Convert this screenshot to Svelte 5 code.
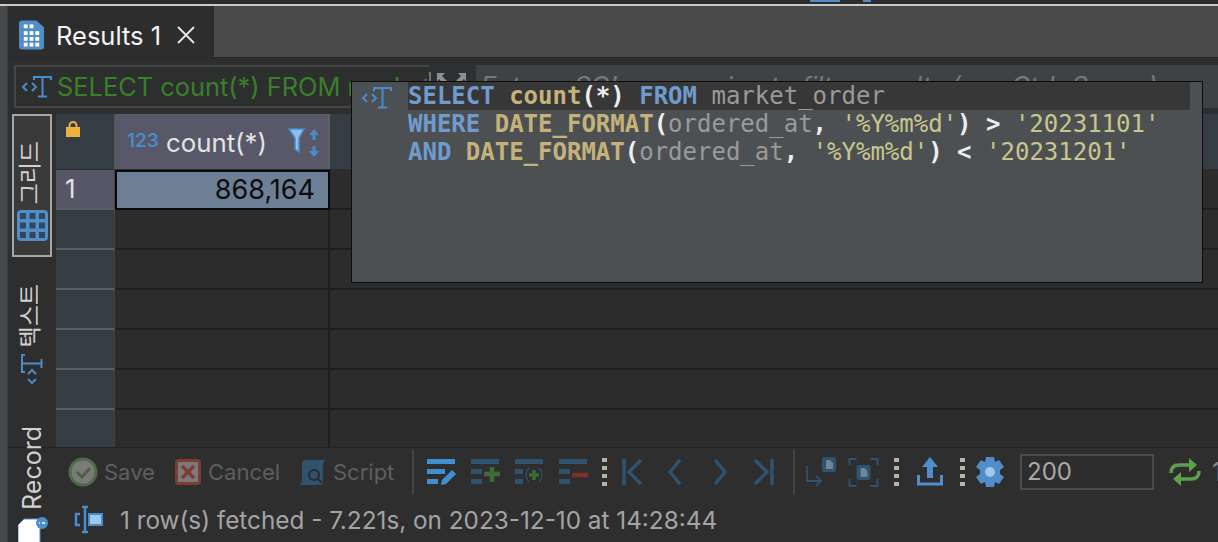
<script>
  const emptyRows = [0, 1, 2, 3, 4, 5];
  const gridCells = [0, 1, 2, 3, 4, 5, 6, 7, 8];
</script>

{#snippet sqlIcon()}
  <svg class="sql-icon" width="32" height="26" viewBox="0 0 32 26" fill="none">
    <path d="M6 9l-4 4 4 4M11 9l4 4-4 4" stroke="#4a8bc9" stroke-width="2" />
    <path d="M13 6V3h17v3M21.500 3v19M17 22.500h9" stroke="#4a8bc9" stroke-width="2" />
  </svg>
{/snippet}

{#snippet dots()}
  <span class="dots"><i></i><i></i><i></i><i></i></span>
{/snippet}

<div class="window">
  <div class="top-strip">
    <span class="sliver one"></span>
    <span class="sliver two"></span>
  </div>
  <div class="top-line"></div>

  <div class="frame">
    <div class="tabs">
      <div class="tab">
        <svg width="25" height="30" viewBox="0 0 26 30">
          <path d="M3 0h15l8 7v20a3 3 0 0 1-3 3H3a3 3 0 0 1-3-3V3a3 3 0 0 1 3-3z" fill="#4f8ec9" />
          <g fill="#fff">
            <rect x="5" y="4" width="4" height="4" /><rect x="11" y="4" width="4" height="4" />
            <rect x="5" y="11" width="4" height="4" /><rect x="11" y="11" width="4" height="4" /><rect x="17" y="11" width="4" height="4" />
            <rect x="5" y="17" width="4" height="4" /><rect x="11" y="17" width="4" height="4" /><rect x="17" y="17" width="4" height="4" />
            <rect x="5" y="23" width="4" height="4" /><rect x="11" y="23" width="4" height="4" /><rect x="17" y="23" width="4" height="4" />
          </g>
        </svg>
        <span class="tab-label">Results 1</span>
        <svg class="tab-close" width="20" height="20" viewBox="0 0 20 20">
          <path d="M2 2l16 16M18 2L2 18" stroke="#e8e8e8" stroke-width="1.800" />
        </svg>
      </div>
    </div>

    <div class="filter-bar">
      <div class="filter-input">
        {@render sqlIcon()}
        <span class="filter-text">SELECT count(*) FROM market_order</span>
      </div>
      <div class="filter-tools">
        <svg width="38" height="16" viewBox="0 0 38 16">
          <path d="M1 1v15" stroke="#b5b5b5" stroke-width="1" />
          <path d="M8 2h8l-3 3 5 5-3 3-5-5-2 3z" fill="#8e9192" />
          <path d="M37 2h-8l3 3-5 5 3 3 5-5 2 3z" fill="#8e9192" />
        </svg>
      </div>
      <div class="filter-hint">Enter a SQL expression to filter results (use Ctrl+Space)</div>
    </div>

    <div class="content">
      <div class="side-tabs">
        <div class="side-tab active">
          <span class="side-label">그리드</span>
          <svg width="31" height="31" viewBox="0 0 31 31">
            <rect width="31" height="31" rx="4" fill="#4f8ec9" />
            {#each gridCells as c}
              <rect x={3 + (c % 3) * 9.500} y={3 + Math.floor(c / 3) * 9.500} width="6" height="6" fill="#35465a" />
            {/each}
          </svg>
        </div>
        <div class="side-tab text-tab">
          <span class="side-label">텍스트</span>
          <span class="rotated-icon">{@render sqlIcon()}</span>
        </div>
        <div class="side-tab record-tab">
          <span class="side-label latin">Record</span>
        </div>
        <div class="record-icon">
          <svg width="30" height="28" viewBox="0 0 30 28">
            <path d="M0 8l6-6h14a2 2 0 0 1 2 2v24H0z" fill="#fff" stroke="#4f8ec9" stroke-width="1" />
            <circle cx="24" cy="6" r="6" fill="#4f8ec9" />
            <path d="M21 6h1M24 6h3" stroke="#fff" stroke-width="1.500" />
          </svg>
        </div>
      </div>

      <div class="grid-area">
        <div class="grid-head">
          <div class="corner">
            <svg width="14" height="16" viewBox="0 0 14 16">
              <path d="M3.500 7V4.500a3.500 3.500 0 0 1 7 0V7" fill="none" stroke="#f0b03c" stroke-width="2" />
              <rect y="6" width="14" height="10" fill="#f0b03c" />
            </svg>
          </div>
          <div class="col-head">
            <span class="type-tag">123</span>
            <span class="col-name">count(*)</span>
            <svg class="col-icons" width="34" height="30" viewBox="0 0 34 30">
              <path d="M1 1h15l-5 9v14l-4-3V10z" fill="#8ec0ea" stroke="#4a8bc9" stroke-width="1.500" />
              <path d="M26 1l-5 6h3.500v5h3V7H31zM26 29l-5-6h3.500v-5h3v5H31z" fill="#4a8bc9" />
            </svg>
          </div>
          <div class="head-rest"></div>
        </div>
        <div class="grid-row first">
          <div class="row-num selected">1</div>
          <div class="cell selected">868,164</div>
          <div class="cell-rest"></div>
        </div>
        {#each emptyRows as r}
          <div class="grid-row">
            <div class="row-num"></div>
            <div class="cell"></div>
            <div class="cell-rest"></div>
          </div>
        {/each}
      </div>
    </div>

    <div class="toolbar">
      <span class="tool-btn save">
        <svg width="30" height="30" viewBox="0 0 30 30">
          <circle cx="15" cy="15" r="13" fill="#7a7a7a" stroke="#4d6b46" stroke-width="3" />
          <path d="M9 15l5 5 8-9" fill="none" stroke="#46663f" stroke-width="3" />
        </svg>
        <span>Save</span>
      </span>
      <span class="tool-btn cancel">
        <svg width="26" height="26" viewBox="0 0 26 26">
          <rect x="1.500" y="1.500" width="23" height="23" rx="2" fill="#7a7a7a" stroke="#7d3d35" stroke-width="3" />
          <path d="M7 7l12 12M19 7L7 19" stroke="#7d3d35" stroke-width="3.500" />
        </svg>
        <span>Cancel</span>
      </span>
      <span class="tool-btn script">
        <svg width="30" height="28" viewBox="0 0 30 28">
          <path d="M6 2h22c-3 1-3 4-3 7v16c0 1-1 2-2 2H1c2-1 3-3 3-6V5c0-2 1-3 2-3z" fill="#2f526f" />
          <circle cx="16" cy="17" r="5" fill="none" stroke="#2b2b2b" stroke-width="2" />
          <path d="M20 21l4 4" stroke="#2b2b2b" stroke-width="2" />
        </svg>
        <span>Script</span>
      </span>
      <span class="divider"></span>

      <svg class="ic" width="30" height="30" viewBox="0 0 30 30">
        <path d="M1 2h28v5H1zM1 12h18v5H1zM1 22h11v5H1z" fill="#3f8fd2" />
        <path d="M15 28l1-5 10-10 4 4-10 10z" fill="#3f8fd2" />
      </svg>
      <svg class="ic" width="30" height="30" viewBox="0 0 30 30">
        <path d="M1 2h28v5H1zM1 12h11v5H1zM1 22h11v5H1z" fill="#2f526f" />
        <path d="M14 17h16M22 10v15" stroke="#3d6b35" stroke-width="4.500" />
      </svg>
      <svg class="ic" width="30" height="30" viewBox="0 0 30 30">
        <path d="M1 2h28v5H1zM1 12h8v5H1zM1 22h8v5H1z" fill="#2f526f" />
        <path d="M15 11c-4 4-4 10 0 14M25 11c4 4 4 10 0 14" fill="none" stroke="#2f526f" stroke-width="1.200" />
        <path d="M15 18h10M20 13v10" stroke="#3d6b35" stroke-width="3.500" />
      </svg>
      <svg class="ic" width="30" height="30" viewBox="0 0 30 30">
        <path d="M1 2h28v5H1zM1 12h11v5H1zM1 22h11v5H1z" fill="#2f526f" />
        <path d="M14 18h16" stroke="#7d3229" stroke-width="4.500" />
      </svg>
      {@render dots()}

      <svg class="nav nav-first" width="20" height="26" viewBox="0 0 20 26">
        <path d="M2 0v26" stroke="#2f526f" stroke-width="3.500" />
        <path d="M19 1L7 13l12 12" fill="none" stroke="#2f526f" stroke-width="3.500" />
      </svg>
      <svg class="nav nav-prev" width="13" height="26" viewBox="0 0 13 26">
        <path d="M12 1L2 13l10 12" fill="none" stroke="#2f526f" stroke-width="3.500" />
      </svg>
      <svg class="nav nav-next" width="13" height="26" viewBox="0 0 13 26">
        <path d="M1 1l10 12L1 25" fill="none" stroke="#2f526f" stroke-width="3.500" />
      </svg>
      <svg class="nav nav-last" width="20" height="26" viewBox="0 0 20 26">
        <path d="M18 0v26" stroke="#2f526f" stroke-width="3.500" />
        <path d="M1 1l12 12L1 25" fill="none" stroke="#2f526f" stroke-width="3.500" />
      </svg>
      <span class="divider second"></span>

      <svg class="ic doc" width="30" height="30" viewBox="0 0 30 30">
        <path d="M1 9v15h13M10 19l5 5-5 5" fill="none" stroke="#2f526f" stroke-width="1.800" />
        <rect x="16" y="0" width="14" height="15" rx="2" fill="#2f526f" />
        <path d="M20 3h4l3 3v6h-7z" fill="#6f8496" />
      </svg>
      <svg class="ic focus" width="31" height="30" viewBox="0 0 30 30">
        <path d="M1 8V2h7M22 2h7v6M29 22v7h-7M8 29H1v-7" fill="none" stroke="#2f526f" stroke-width="2" />
        <rect x="8" y="8" width="14" height="15" rx="2" fill="#2f526f" />
        <path d="M12 11h4l3 3v6h-7z" fill="#6f8496" />
      </svg>
      {@render dots()}
      <svg class="ic upload" width="26" height="29" viewBox="0 0 26 29">
        <path d="M13 0l8 10h-5v11h-6V10H5z" fill="#4f8ec9" />
        <path d="M1.500 18v9h23v-9" fill="none" stroke="#4f8ec9" stroke-width="3" />
      </svg>
      <span class="dots tight"><i></i><i></i><i></i><i></i></span>
      <svg class="ic gear" width="30" height="30" viewBox="0 0 30 30">
        <path d="M11 0h8l1 5 4-2 5 7-4 3v4l4 3-5 7-4-2-1 5h-8l-1-5-4 2-5-7 4-3v-4L1 10l5-7 4 2z" fill="#4f8ec9" />
        <circle cx="15" cy="15" r="5" fill="#9cc9ec" />
      </svg>
      <div class="fetch-size">200</div>
      <svg class="ic refresh" width="32" height="28" viewBox="0 0 32 28">
        <path d="M2 15c0-6 3-8 8-8h12M30 13c0 6-3 8-8 8H10" fill="none" stroke="#5ea04a" stroke-width="3.500" />
        <path d="M20 0l8 7-8 7zM12 14l-8 7 8 7z" fill="#5ea04a" />
      </svg>
      <span class="cut-digit">1</span>
    </div>

    <div class="status">
      <svg width="30" height="30" viewBox="0 0 30 30">
        <path d="M6 9H2v11h4M8 2h6M8 27h6M11 2v25" fill="none" stroke="#4a8bc9" stroke-width="2.500" />
        <rect x="14" y="8" width="15" height="13" fill="#4a8bc9" />
        <rect x="16" y="10" width="11" height="9" fill="#9cc9ec" />
      </svg>
      <span>1 row(s) fetched - 7.221s, on 2023-12-10 at 14:28:44</span>
    </div>
  </div>

  <div class="popup">
    <div class="popup-icon">{@render sqlIcon()}</div>
    <div class="code">
      <div class="line current"><b class="kw">SELECT</b> <b class="fn">count</b><b class="pn">(*)</b> <b class="kw">FROM</b> <span class="id">market_order</span></div>
      <div class="line"><b class="kw">WHERE</b> <b class="fn">DATE_FORMAT</b><b class="pn">(</b><span class="id">ordered_at</span><b class="pn">,</b> <span class="str">'%Y%m%d'</span><b class="pn">) &gt;</b> <span class="str">'20231101'</span></div>
      <div class="line"><b class="kw">AND</b> <b class="fn">DATE_FORMAT</b><b class="pn">(</b><span class="id">ordered_at</span><b class="pn">,</b> <span class="str">'%Y%m%d'</span><b class="pn">) &lt;</b> <span class="str">'20231201'</span></div>
    </div>
  </div>
</div>

<style>
  :global(body) {
    margin: 0;
    background: #2e2e2e;
  }

  .window {
    position: relative;
    width: 1218px;
    height: 542px;
    overflow: hidden;
    display: flex;
    flex-direction: column;
    background: #2e2e2e;
    font-family: Inter, "Liberation Sans", sans-serif;
  }

  .top-strip {
    position: relative;
    height: 4px;
    background: #2c2c2c;
  }

  .sliver {
    position: absolute;
    top: 0;
    height: 2px;
    background: #4f8ec9;
  }

  .sliver.one { left: 810px; width: 30px; }
  .sliver.two { left: 863px; width: 8px; }

  .top-line {
    height: 2px;
    background: #c9c9c9;
  }

  .frame {
    flex: 1;
    min-height: 0;
    margin-left: 7px;
    display: flex;
    flex-direction: column;
    border-left: 1px solid #3a3a3a;
    box-shadow: -7px 0 0 #474a4c;
    background: #2e2e2e;
  }

  .tabs {
    height: 51px;
    flex-shrink: 0;
    display: flex;
    background: #4a4a4b;
  }

  .tab {
    width: 206px;
    display: flex;
    align-items: center;
    padding: 7px 0 0 11px;
    box-sizing: border-box;
    background: #2d2d2d;
    color: #f4f4f4;
    font-size: 25.500px;
  }

  .tab-label {
    margin-left: 12px;
  }

  .tab-close {
    margin-left: 15px;
  }

  .filter-bar {
    height: 57px;
    flex-shrink: 0;
    display: flex;
    background: #2e2e2e;
    padding-top: 7px;
    box-sizing: border-box;
    border-top: 1px solid #2a2a2a;
  }

  .filter-input {
    width: 415px;
    height: 43px;
    margin-left: 6px;
    box-sizing: border-box;
    flex-shrink: 0;
    display: flex;
    align-items: center;
    gap: 4px;
    padding-left: 5px;
    border: 2px solid #454545;
    border-right: none;
    background: #2d2f2f;
    overflow: hidden;
    white-space: nowrap;
  }

  .filter-text {
    font-size: 25.400px;
    color: #3a7f2a;
  }

  .filter-tools {
    width: 47px;
    flex-shrink: 0;
    padding-top: 6px;
    background: #2f3031;
    height: 43px;
    box-sizing: border-box;
  }

  .filter-hint {
    flex: 1;
    min-width: 0;
    height: 43px;
    box-sizing: border-box;
    padding: 5px 0 0 5px;
    background: #3f4244;
    color: #77797b;
    font-size: 25.600px;
    font-style: italic;
    white-space: nowrap;
    overflow: hidden;
  }

  .content {
    height: 333px;
    flex-shrink: 0;
    display: flex;
    background: #2e2e2e;
  }

  .side-tabs {
    width: 48px;
    flex-shrink: 0;
    display: flex;
    flex-direction: column;
    align-items: center;
    box-sizing: border-box;
    position: relative;
  }

  .side-tab {
    width: 40px;
    flex-shrink: 0;
    display: flex;
    flex-direction: column;
    align-items: center;
    box-sizing: border-box;
  }

  .side-tab.active {
    height: 143px;
    border: 2px solid #a5a5a5;
    background: #3a3a3a;
    padding-top: 25px;
    gap: 6px;
  }

  .side-tab.text-tab {
    margin-top: 27px;
    gap: 8px;
  }

  .rotated-icon {
    display: block;
    transform: rotate(-90deg);
    height: 26px;
    margin-top: 1px;
  }

  .side-tab.record-tab {
    margin-top: 44px;
  }

  .side-label {
    writing-mode: vertical-rl;
    text-orientation: sideways;
    transform: rotate(180deg);
    margin-right: 8px;
    color: #d2d2d2;
    font-size: 23px;
    line-height: 26px;
    font-family: "Noto Sans CJK KR", "Liberation Sans", sans-serif;
  }

  .side-label.latin {
    margin-right: 0;
    font-family: Inter, "Liberation Sans", sans-serif;
    font-size: 25px;
    line-height: 28px;
    color: #d0d0d0;
  }

  .record-icon {
    position: absolute;
    left: 10px;
    top: 403px;
  }

  .grid-area {
    flex: 1;
    min-width: 0;
    display: flex;
    flex-direction: column;
    overflow: hidden;
    background: #2c2c2c;
  }

  .grid-head {
    height: 56px;
    flex-shrink: 0;
    display: flex;
    border-bottom: 1px solid #2d2d2d;
    box-sizing: border-box;
  }

  .corner {
    width: 59px;
    flex-shrink: 0;
    background: #343c44;
    padding: 7px 0 0 10px;
    box-sizing: border-box;
    border-right: 1px solid #555;
  }

  .col-head {
    width: 215px;
    flex-shrink: 0;
    display: flex;
    align-items: center;
    padding: 2px 0 0 12px;
    box-sizing: border-box;
    background: #585868;
    color: #e3e3e3;
    border-right: 2px solid #5f5f5f;
  }

  .type-tag {
    color: #4a8bc9;
    font-size: 19px;
    font-weight: 600;
    margin: 0 7px 4px 0;
  }

  .col-name {
    font-size: 25.800px;
  }

  .col-icons {
    margin-left: auto;
    margin-right: 6px;
    flex-shrink: 0;
  }

  .head-rest {
    flex: 1;
    background: #343c44;
  }

  .grid-row {
    height: 40px;
    flex-shrink: 0;
    display: flex;
  }

  .row-num {
    width: 59px;
    flex-shrink: 0;
    box-sizing: border-box;
    background: #343c44;
    border-bottom: 2px solid #5e5e5e;
    border-right: 1px solid #444;
    color: #e0e0e0;
    font-size: 26px;
    line-height: 38px;
    padding-left: 9px;
  }

  .row-num.selected {
    background: #565666;
  }

  .cell {
    width: 215px;
    flex-shrink: 0;
    box-sizing: border-box;
    border-right: 2px solid #1f1f1f;
    border-bottom: 2px solid #1f1f1f;
  }

  .cell.selected {
    border: 2px solid #0a0a0a;
    background: #6d7f95;
    color: #0d0d0d;
    font-size: 27px;
    line-height: 35px;
    text-align: right;
    padding-right: 13px;
  }

  .cell-rest {
    flex: 1;
    box-sizing: border-box;
    border-bottom: 2px solid #1f1f1f;
  }

  .toolbar {
    height: 50px;
    flex-shrink: 0;
    display: flex;
    align-items: center;
    padding: 0 0 2px 60px;
    box-sizing: border-box;
    color: #5e5e5e;
    font-size: 22px;
    white-space: nowrap;
    overflow: hidden;
    border-top: 1px solid #232323;
  }

  .tool-btn {
    display: inline-flex;
    align-items: center;
    gap: 6px;
  }

  .tool-btn span {
    width: 50px;
  }

  .tool-btn.cancel {
    margin-left: 21px;
    gap: 7px;
  }

  .tool-btn.cancel span {
    width: 71px;
  }

  .tool-btn.script {
    margin-left: 19px;
    gap: 5px;
  }

  .tool-btn.script span {
    width: 62px;
  }

  .divider {
    width: 2px;
    height: 44px;
    flex-shrink: 0;
    background: #444;
    margin: 0 12px 0 17px;
  }

  .divider.second {
    margin: 0 11px 0 19px;
  }

  .ic {
    margin-right: 14px;
    flex-shrink: 0;
  }

  .dots {
    display: inline-flex;
    flex-direction: column;
    flex-shrink: 0;
    gap: 4px;
    margin-right: 15px;
  }

  .dots i {
    display: block;
    width: 5px;
    height: 4px;
    background: #b9b5a6;
  }

  .dots.tight {
    margin-right: 10px;
  }

  .nav {
    flex-shrink: 0;
  }

  .nav-first { margin-right: 26px; }
  .nav-prev { margin-right: 33px; }
  .nav-next { margin-right: 27px; }

  .doc { margin-right: 12px; }
  .focus { margin-right: 15px; }
  .upload { margin-left: 3px; margin-right: 17px; }

  .gear {
    margin-right: 15px;
  }

  .fetch-size {
    width: 134px;
    height: 36px;
    flex-shrink: 0;
    box-sizing: border-box;
    border: 2px solid #4a4a4a;
    background: #2d2d2d;
    color: #a8a8a8;
    font-size: 24px;
    line-height: 32px;
    padding-left: 5px;
    margin-right: 15px;
  }

  .refresh {
    margin-right: 11px;
  }

  .cut-digit {
    color: #8a8a8a;
    font-size: 25px;
  }

  .status {
    flex: 1;
    display: flex;
    align-items: center;
    gap: 16px;
    padding: 0 0 0 66px;
    color: #a4a4a4;
    font-size: 24.300px;
    white-space: nowrap;
  }

  .popup {
    position: absolute;
    left: 351px;
    top: 81px;
    width: 852px;
    height: 202px;
    box-sizing: border-box;
    border: 1px solid #0c0c0c;
    background: #4c5053;
    display: flex;
  }

  .popup-icon {
    width: 56px;
    flex-shrink: 0;
    padding: 3px 0 0 9px;
    box-sizing: border-box;
  }

  .sql-icon {
    display: block;
    flex-shrink: 0;
  }

  .code {
    flex: 1;
    font-family: "DejaVu Sans Mono", monospace;
    font-size: 24px;
    line-height: 28px;
    padding: 0 12px 0 0;
    min-width: 0;
  }

  .line {
    height: 28px;
    white-space: pre;
  }

  .line.current {
    background: #373737;
  }

  .kw { color: #6f9bce; }
  .fn { color: #c5b27a; }
  .pn { color: #eeeeee; }
  .id { color: #9a9a9a; }
  .str { color: #c9c68b; }
</style>
